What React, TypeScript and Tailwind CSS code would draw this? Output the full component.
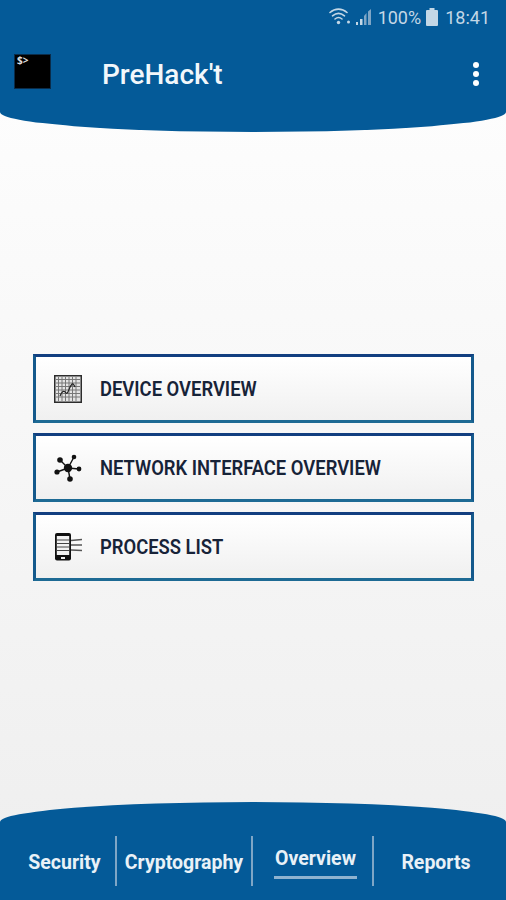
const roboto = "font-['Roboto',sans-serif]"

function WifiIcon() {
  return (
    <svg width="22" height="20" viewBox="0 0 22 20" fill="none" stroke="#c3d7e6" strokeLinecap="round">
      <path d="M1 5.500C6 1 13 1 18 5.500" strokeWidth="1.600" />
      <path d="M3.500 8.800C7.500 5.500 11.500 5.500 15.500 8.800" strokeWidth="1.600" />
      <path d="M6 12C8 10.300 11 10.300 13 12" strokeWidth="1.600" />
      <circle cx="9.500" cy="15.500" r="1.700" fill="#c3d7e6" stroke="none" />
      <circle cx="19.500" cy="15" r="1.500" fill="#c3d7e6" stroke="none" />
    </svg>
  )
}

function SignalIcon() {
  return (
    <svg width="15" height="18" viewBox="0 0 15 18">
      <rect x="0" y="14" width="2" height="3" fill="#c3d7e6" />
      <rect x="4" y="11" width="2.500" height="6" fill="#c3d7e6" />
      <path d="M8 8L10.500 5V17H8Z" fill="#7fa6c6" />
      <path d="M12 3.500L15 1V17H12Z" fill="#7fa6c6" />
    </svg>
  )
}

function BatteryIcon() {
  return (
    <svg width="12" height="18" viewBox="0 0 12 18">
      <path d="M3.500 0H8.500V2H11A1 1 0 0 1 12 3V17A1 1 0 0 1 11 18H1A1 1 0 0 1 0 17V3A1 1 0 0 1 1 2H3.500Z" fill="#c3d7e6" />
    </svg>
  )
}

function ChipIcon() {
  return (
    <svg width="28" height="28" viewBox="0 0 28 28" fill="none">
      <rect x="0.750" y="0.750" width="26.500" height="26.500" fill="#e4e4e4" stroke="#2c2c2c" strokeWidth="1.500" />
      <path d="M2 4.500H26M2 8H26M2 11.500H26M2 15H26M2 18.500H26M2 22H26M4.500 2V26M8 2V26M11.500 2V26M15 2V26M18.500 2V26M22 2V26" stroke="#777" strokeWidth="1" />
      <path d="M6 21C8 16 10 15 12 18C14 20 15 12 18 9C19 8 20 10 21 12" stroke="#222" strokeWidth="1.200" />
    </svg>
  )
}

function NodesIcon() {
  return (
    <svg width="28" height="30" viewBox="0 0 28 30" stroke="#111" fill="#111">
      <path d="M14 15L6 7M14 15L20 4M14 15L25 16M14 15L16 26M14 15L3 19" strokeWidth="1.400" />
      <circle cx="14" cy="15" r="4.200" stroke="none" />
      <circle cx="6" cy="7" r="2.800" stroke="none" />
      <circle cx="20" cy="4" r="2.300" stroke="none" />
      <circle cx="25" cy="16" r="2.400" stroke="none" />
      <circle cx="16" cy="26" r="2.800" stroke="none" />
      <circle cx="3" cy="19" r="2.600" stroke="none" />
    </svg>
  )
}

function PhoneListIcon() {
  return (
    <svg width="28" height="28" viewBox="0 0 28 28" fill="none">
      <rect x="1" y="0" width="16" height="27.500" rx="2" fill="#111" />
      <rect x="2.800" y="3" width="12.400" height="19" fill="#f2f2f2" />
      <path d="M2.800 7H15.200M2.800 10.500H15.200M2.800 14H15.200M2.800 17.500H15.200" stroke="#444" strokeWidth="1.200" />
      <rect x="7" y="24" width="4" height="2" fill="#eee" />
      <path d="M17 7.500L28 6.500M17 12H28M17 17L28 17.500" stroke="#555" strokeWidth="1.400" />
    </svg>
  )
}

function MenuButton({ icon, label }: { icon: React.ReactNode; label: string }) {
  return (
    <button className="flex h-[69px] w-full items-center border-[3px] border-t-[#123f80] border-r-[#14598c] border-b-[#1d6a94] border-l-[#14598c] bg-gradient-to-b from-white to-[#f0f0f0] text-left">
      <span className="flex w-[64px] shrink-0 justify-start pl-[18px]">{icon}</span>
      <span className={`${roboto} inline-block origin-left scale-x-[0.92] text-[20px] font-semibold whitespace-nowrap text-[#172338]`}>{label}</span>
    </button>
  )
}

function Tab({ label, className }: { label: string; className: string }) {
  return (
    <div className={`flex h-[50px] items-center justify-center pt-[4px] ${className}`}>
      <span className={`${roboto} text-[19.500px] font-bold text-[#e9f1f7]`}>{label}</span>
    </div>
  )
}

export default function App() {
  return (
    <div className="flex h-[900px] w-[506px] flex-col overflow-hidden bg-gradient-to-b from-white to-[#eeeeee]">
      <header className="h-[132px] shrink-0 rounded-b-[253px_20px] bg-[#045a98] pr-[16px] pl-[14px]">
        <div className={`${roboto} flex h-[34px] items-center justify-end gap-[5px] text-[18px] text-[#c3d7e6]`}>
          <WifiIcon />
          <SignalIcon />
          <span className="ml-[2px]">100%</span>
          <BatteryIcon />
          <span className="ml-[2px]">18:41</span>
        </div>
        <div className="flex items-start pt-[20px]">
          <div className="h-[35px] w-[37px] border border-[#0a2c4a] bg-black pl-[2px] text-[10px] leading-[10px] font-bold text-[#dddddd]">
            $&gt;
          </div>
          <h1 className={`${roboto} ml-[51px] flex-1 pt-[4px] text-[28px] leading-[34px] font-medium text-[#f2f7fb]`}>PreHack't</h1>
          <div className="flex flex-col gap-[3px] pt-[8px] pr-[11px]">
            <span className="size-[6px] rounded-full bg-white" />
            <span className="size-[6px] rounded-full bg-white" />
            <span className="size-[6px] rounded-full bg-white" />
          </div>
        </div>
      </header>

      <main className="flex flex-1 flex-col gap-[10px] pt-[222px] pr-[32px] pl-[33px]">
        <MenuButton icon={<ChipIcon />} label="DEVICE OVERVIEW" />
        <MenuButton icon={<NodesIcon />} label="NETWORK INTERFACE OVERVIEW" />
        <MenuButton icon={<PhoneListIcon />} label="PROCESS LIST" />
      </main>

      <footer className="flex h-[98px] shrink-0 items-start rounded-t-[253px_20px] bg-[#045a98] pt-[34px]">
        <Tab label="Security" className="w-[115px] pl-[14px]" />
        <div className="h-[50px] w-[2px] bg-[#7fa6c6]" />
        <Tab label="Cryptography" className="w-[134px]" />
        <div className="h-[50px] w-[2px] bg-[#7fa6c6]" />
        <div className="flex h-[50px] w-[119px] flex-col items-center pt-[11px] pl-[6px]">
          <span className={`${roboto} border-b-[3px] border-[#8fb3d0] px-[1px] pb-[5px] text-[19.500px] leading-[24px] font-bold text-[#e9f1f7]`}>Overview</span>
        </div>
        <div className="h-[50px] w-[2px] bg-[#7fa6c6]" />
        <Tab label="Reports" className="flex-1 pr-[8px]" />
      </footer>
    </div>
  )
}
